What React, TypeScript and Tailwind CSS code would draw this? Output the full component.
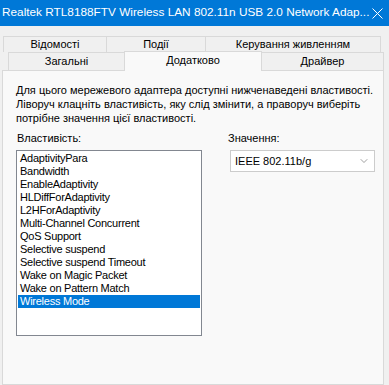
import { ChevronDown } from 'lucide-react';

const font = { fontFamily: '"Liberation Sans", Arial, sans-serif' };

const props = [
  'AdaptivityPara',
  'Bandwidth',
  'EnableAdaptivity',
  'HLDiffForAdaptivity',
  'L2HForAdaptivity',
  'Multi-Channel Concurrent',
  'QoS Support',
  'Selective suspend',
  'Selective suspend Timeout',
  'Wake on Magic Packet',
  'Wake on Pattern Match',
  'Wireless Mode',
];

export default function App() {
  return (
    <div
      className="flex h-[385px] w-[389px] flex-col overflow-hidden bg-[#f0f0f0] text-[11px] text-black"
      style={font}
    >
      {/* заголовок вікна */}
      <div className="flex h-[26px] shrink-0 items-center justify-between bg-[#0078d7] pl-[2px] pr-[6px] text-[11.8px] text-white">
        <span className="whitespace-nowrap">Realtek RTL8188FTV Wireless LAN 802.11n USB 2.0 Network Adap...</span>
        <svg width="11" height="11" viewBox="0 0 11 11">
          <path d="M0.5 0.5 L10.5 10.5 M10.5 0.5 L0.5 10.5" stroke="white" strokeWidth="1" />
        </svg>
      </div>

      {/* вкладки, ряд 1 */}
      <div className="mt-[10px] ml-[3px] flex h-[16px] shrink-0">
        <div className="flex w-[103px] items-center justify-center border-t border-l border-[#d9d9d9] bg-[#f0f0f0]">Відомості</div>
        <div className="flex w-[99px] items-center justify-center border-t border-l border-[#d9d9d9] bg-[#f0f0f0]">Події</div>
        <div className="flex w-[176px] items-center justify-center border-t border-l border-r border-[#d9d9d9] bg-[#f0f0f0]">Керування живленням</div>
      </div>

      {/* вкладки, ряд 2 */}
      <div className="relative z-10 ml-[8px] flex h-[18px] shrink-0 items-end">
        <div className="flex h-[18px] w-[116px] items-center justify-center border-t border-l border-[#d9d9d9] bg-[#f0f0f0]">Загальні</div>
        <div className="-mb-px flex h-[20px] w-[138px] items-center justify-center border-t border-l border-r border-[#d9d9d9] bg-[#f9f9f9] pb-[2px]">Додатково</div>
        <div className="flex h-[18px] w-[122px] items-center justify-center border-t border-r border-[#d9d9d9] bg-[#f0f0f0]">Драйвер</div>
      </div>

      {/* панель */}
      <div className="ml-[2px] w-[382px] flex-1 border border-[#d9d9d9] bg-[#f9f9f9] px-[13px] pt-[12px]">
        <p className="whitespace-nowrap leading-[14px]">
          Для цього мережевого адаптера доступні нижченаведені властивості.
          <br />
          Ліворуч клацніть властивість, яку слід змінити, а праворуч виберіть
          <br />
          потрібне значення цієї властивості.
        </p>

        <div className="mt-[6px] flex">
          <div className="flex flex-col">
            <div className="ml-[1px] mb-[5px] leading-[14px]">Властивість:</div>
            <div className="h-[186px] w-[186px] border border-[#828790] bg-white p-px">
              {props.map((p) => (
                <div
                  key={p}
                  className={
                    'h-[13px] pl-[2px] leading-[13px] tracking-[-0.25px] whitespace-nowrap ' +
                    (p === 'Wireless Mode' ? 'bg-[#0078d7] text-white' : '')
                  }
                >
                  {p}
                </div>
              ))}
            </div>
          </div>

          <div className="ml-[26px] flex flex-col">
            <div className="mb-[5px] leading-[14px]">Значення:</div>
            <div className="ml-[2px] flex h-[22px] w-[145px] items-center justify-between border border-[#cccccc] bg-white pl-[4px] pr-[4px]">
              <span>IEEE 802.11b/g</span>
              <ChevronDown size={12} strokeWidth={1.2} className="text-[#606060]" />
            </div>
          </div>
        </div>
      </div>
    </div>
  );
}
